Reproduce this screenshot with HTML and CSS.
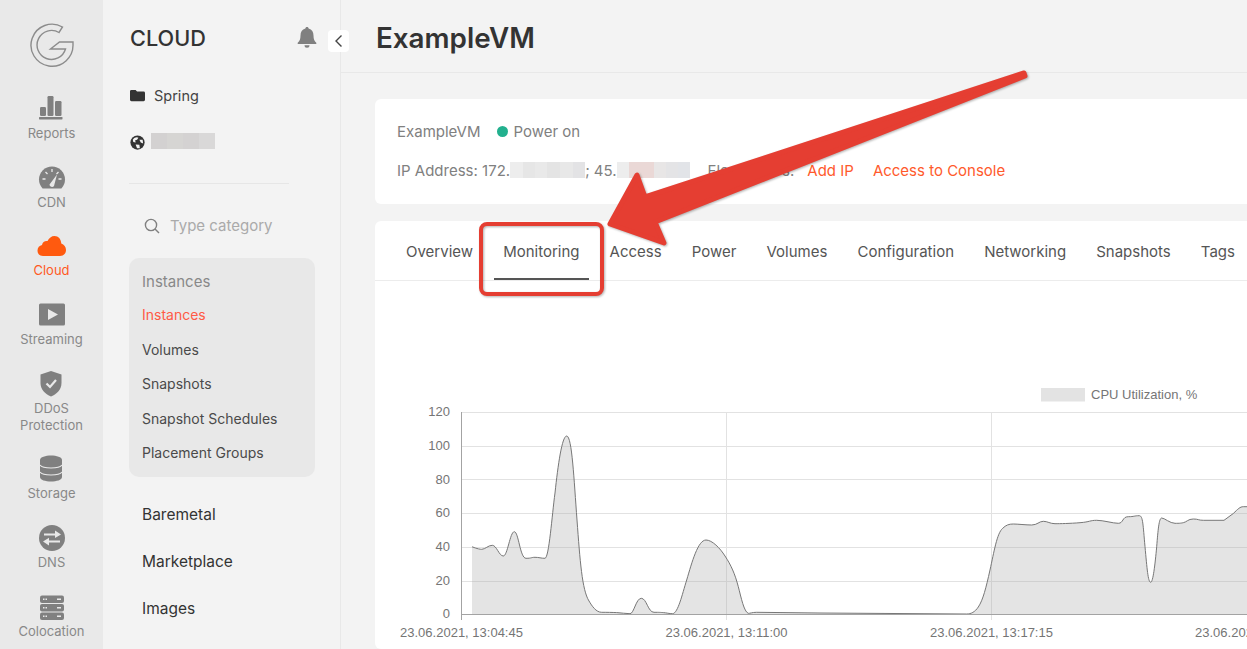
FILE: index.html
```html
<!DOCTYPE html>
<html lang="en">
<head>
<meta charset="utf-8">
<title>ExampleVM</title>
<link rel="stylesheet" href="styles.css">
</head>
<body>
<div class="app">
  <nav class="rail">
    <svg class="logo" viewBox="0 0 44 44"><path d="M32.5 4 A21 21 0 1 0 43 21.5 L43 19 L29.5 19 L20.5 26 L35.5 26 A14.5 14.5 0 1 1 29 9.5 Z" fill="none" stroke="#8c8c8c" stroke-width="1.4"/></svg>
    <a class="rail-item">
      <svg class="icon" viewBox="0 0 26 26"><rect x="2" y="13" width="6" height="9" rx="1.2"/><rect x="9.5" y="2" width="6" height="20" rx="1.2"/><rect x="17" y="7" width="6.5" height="15" rx="1.2"/><rect x="1" y="23" width="23.5" height="2.4" rx=".6"/></svg>
      <span>Reports</span>
    </a>
    <a class="rail-item">
      <svg class="icon" viewBox="0 0 26 26"><path d="M3.6 25.5 A13 13 0 1 1 22.4 25.5 Z"/><path d="M13 6v3M6.5 9l2 2M19.5 9l-2 2M3.5 16h3M22.5 16h-3" stroke="#e9e9e9" stroke-width="1.3" fill="none"/><path d="M10.5 21.5 L18 11.5 L15 23 A2.5 2.5 0 0 1 10.5 21.5 Z" fill="#e9e9e9"/></svg>
      <span>CDN</span>
    </a>
    <a class="rail-item active">
      <svg class="icon" viewBox="0 0 26 26"><path d="M4 25 C0.5 25 -1.5 22.5 -1.5 19.5 C-1.5 16.5 .5 14.5 3 14 C3.5 11 6 9.5 8.5 10 C10 7 12.5 5 15.5 5 C19.5 5 22 8 22.3 12.5 C25 13.5 27 16 27 19 C27 22.5 24.5 25 21 25 Z"/></svg>
      <span>Cloud</span>
    </a>
    <a class="rail-item">
      <svg class="icon" viewBox="0 0 26 26"><rect x="0" y="3.5" width="26" height="22" rx="1.5"/><path d="M9 9 L19 14.5 L9 20 Z" fill="#e9e9e9"/></svg>
      <span>Streaming</span>
    </a>
    <a class="rail-item">
      <svg class="icon" viewBox="0 0 26 26"><path d="M13 2 L23.5 5.5 L23.5 14 C23.5 20.5 19 25 13 27.5 C7 25 2.5 20.5 2.5 14 L2.5 5.5 Z"/><path d="M8.5 14.5 L12 18 L18 11" fill="none" stroke="#e9e9e9" stroke-width="2.2"/></svg>
      <span>DDoS<br>Protection</span>
    </a>
    <a class="rail-item">
      <svg class="icon" viewBox="0 0 26 26"><path d="M2 6 C2 0 24 0 24 6 V23 C24 29 2 29 2 23 Z"/><path d="M2 11 C5 15 21 15 24 11 M2 18 C5 22 21 22 24 18" fill="none" stroke="#e9e9e9" stroke-width="1.2"/></svg>
      <span>Storage</span>
    </a>
    <a class="rail-item">
      <svg class="icon" viewBox="0 0 26 26"><circle cx="13" cy="15" r="13"/><path d="M5 11.5 H17 M21 18.5 H9" fill="none" stroke="#e9e9e9" stroke-width="1.8"/><path d="M16 7.5 L22 11.5 L16 15 Z M10 14.8 L4 18.5 L10 22.5 Z" fill="#e9e9e9"/></svg>
      <span>DNS</span>
    </a>
    <a class="rail-item">
      <svg class="icon" viewBox="0 0 26 26"><rect x="1" y="3.5" width="24" height="7.5" rx="2"/><rect x="1" y="12" width="24" height="7.5" rx="2"/><rect x="1" y="20.5" width="24" height="7.5" rx="2"/><path d="M4 7.2h1.5M6.5 7.2h1.5M18 7.2h4M4 15.7h1.5M6.5 15.7h1.5M18 15.7h4M4 24.2h1.5M6.5 24.2h1.5M18 24.2h4" stroke="#e9e9e9" stroke-width="1.4"/></svg>
      <span>Colocation</span>
    </a>
  </nav>

  <aside class="side">
    <div class="side-head">
      <h2>CLOUD</h2>
      <svg class="bell" viewBox="0 0 20 22"><path d="M10 1 C11 1 11.6 1.7 11.6 2.6 C15 3.4 16.5 6 16.5 9.5 C16.5 13.5 17.5 15 19.3 16.8 V18 H.7 V16.8 C2.5 15 3.5 13.5 3.5 9.5 C3.5 6 5 3.4 8.4 2.6 C8.4 1.7 9 1 10 1 Z M7.5 19.2 H12.5 A2.5 2.5 0 0 1 7.5 19.2 Z"/></svg>
    </div>
    <div class="side-row">
      <svg class="side-icon" viewBox="0 0 16 14"><path d="M0 2.5 A1.5 1.5 0 0 1 1.5 1 H6 L7.5 2.8 H14.5 A1.5 1.5 0 0 1 16 4.3 V11.5 A1.5 1.5 0 0 1 14.5 13 H1.5 A1.5 1.5 0 0 1 0 11.5 Z"/></svg>
      <span>Spring</span>
    </div>
    <div class="side-row account">
      <svg class="side-icon" viewBox="0 0 16 16"><circle cx="8" cy="8" r="7.6"/><path d="M3 5 C5 2 8 1.8 9 3 L7.5 5 L5.5 5.5 L6 8 L3.5 7.5 Z M10 5 L13.5 5 L14 9 L11.5 8 Z M6 10 L10 10.5 L10.5 14 L7.5 14 Z" fill="#f3f3f3"/></svg>
      <span class="mosaic mosaic-account"></span>
    </div>
    <hr class="side-rule">
    <div class="search">
      <svg class="search-icon" viewBox="0 0 16 16"><circle cx="7" cy="7" r="5.6"/><path d="M11 11 L15 15"/></svg>
      <span>Type category</span>
    </div>
    <div class="panel">
      <div class="panel-head">Instances</div>
      <a class="panel-item current">Instances</a>
      <a class="panel-item">Volumes</a>
      <a class="panel-item">Snapshots</a>
      <a class="panel-item">Snapshot Schedules</a>
      <a class="panel-item">Placement Groups</a>
    </div>
    <a class="side-link first">Baremetal</a>
    <a class="side-link">Marketplace</a>
    <a class="side-link">Images</a>
  </aside>

  <main class="main">
    <header class="top"><h1>ExampleVM</h1></header>
    <div class="content">
      <section class="card info">
        <div class="info-row">
          <span class="muted">ExampleVM</span>
          <span class="dot"></span>
          <span class="muted power">Power on</span>
        </div>
        <div class="info-row">
          <span class="muted">IP Address: 172.</span><span class="mosaic mosaic-ip1"></span><span class="muted">; 45.</span><span class="mosaic mosaic-ip2"></span>
          <span class="muted floating">Floating IPs:</span>
          <a class="action add">Add IP</a>
          <a class="action console">Access to Console</a>
        </div>
      </section>
      <section class="card monitor">
        <div class="tabs">
          <a class="tab">Overview</a>
          <a class="tab selected">Monitoring</a>
          <a class="tab">Access</a>
          <a class="tab">Power</a>
          <a class="tab">Volumes</a>
          <a class="tab">Configuration</a>
          <a class="tab">Networking</a>
          <a class="tab">Snapshots</a>
          <a class="tab">Tags</a>
        </div>
        <svg class="chart" viewBox="375 281 900 368">
          <rect class="legend" x="1041" y="388" width="44" height="13.5"/>
          <text class="label" x="1091" y="399">CPU Utilization, %</text>
          <path class="grid" d="M461 412.5H1275M461 446.5H1275M461 479.5H1275M461 513.5H1275M461 547.5H1275M461 581.5H1275"/>
          <path class="grid" d="M726.5 412V620M991.5 412V620"/>
          <path class="area" d="M472 614.5 L472 546.7 S478 549.3 481.7 549.3 S488 545.3 492.3 545.3 S499 556 503.3 556 S510 531.7 514.3 531.7 S520 558.3 526 558.3 S531 557.3 535 557.3 S541 558.3 545 558.3 C549 558 552 515 555 493 C558 465 562 436 566.7 436 C572 436 574 480 577 520 C580 560 582 590 589 601 C592 606 596 612.3 601.7 612.3 S612 612.4 616.7 612.6 S626 613.7 630 613.7 S636 598.3 641.3 598.3 S648 612.3 654 612.3 S660 612.4 663.3 612.6 S669 613.7 672.7 613.7 C678 613 682 595 686.7 580 C692 562 698 540 706 540 C712 540 720 548 725 556 C731 565 735 574 738.3 586.7 C741 597 744 612 748.3 613.3 C750 613.5 752 612.3 756.7 612.3 L820 613 L966.7 614 C971 614 975 612 978.3 607 C983 600 986 588 990 570 C994 552 997 533 1002.7 528.3 C1006 525 1009 524 1013.3 524 S1026 525 1031.7 525 S1039 521.3 1043.3 521.3 S1050 523.7 1055 523.7 S1070 523.5 1080 522.7 S1090 520.3 1096.7 520.3 S1113 523.3 1118.3 523.3 S1122 516.7 1128.3 516.7 S1134 515.7 1139.3 515.7 C1143 515.7 1143 525 1145 546.7 C1147 568 1148 582.3 1150.7 582.3 C1153 582.3 1155 565 1156.7 546.7 C1158 530 1159 518 1161.7 518 S1170 523.3 1175 523.3 S1180 523.3 1183.3 522.7 S1188 519 1193.3 519 S1198 520.3 1203.3 520.3 L1224 520.3 L1233.3 513.5 C1238 509 1240 506.7 1243.3 506.7 L1275 506.7 L1275 614.5 Z"/>
          <path class="curve" d="M472 546.7 S478 549.3 481.7 549.3 S488 545.3 492.3 545.3 S499 556 503.3 556 S510 531.7 514.3 531.7 S520 558.3 526 558.3 S531 557.3 535 557.3 S541 558.3 545 558.3 C549 558 552 515 555 493 C558 465 562 436 566.7 436 C572 436 574 480 577 520 C580 560 582 590 589 601 C592 606 596 612.3 601.7 612.3 S612 612.4 616.7 612.6 S626 613.7 630 613.7 S636 598.3 641.3 598.3 S648 612.3 654 612.3 S660 612.4 663.3 612.6 S669 613.7 672.7 613.7 C678 613 682 595 686.7 580 C692 562 698 540 706 540 C712 540 720 548 725 556 C731 565 735 574 738.3 586.7 C741 597 744 612 748.3 613.3 C750 613.5 752 612.3 756.7 612.3 L820 613 L966.7 614 C971 614 975 612 978.3 607 C983 600 986 588 990 570 C994 552 997 533 1002.7 528.3 C1006 525 1009 524 1013.3 524 S1026 525 1031.7 525 S1039 521.3 1043.3 521.3 S1050 523.7 1055 523.7 S1070 523.5 1080 522.7 S1090 520.3 1096.7 520.3 S1113 523.3 1118.3 523.3 S1122 516.7 1128.3 516.7 S1134 515.7 1139.3 515.7 C1143 515.7 1143 525 1145 546.7 C1147 568 1148 582.3 1150.7 582.3 C1153 582.3 1155 565 1156.7 546.7 C1158 530 1159 518 1161.7 518 S1170 523.3 1175 523.3 S1180 523.3 1183.3 522.7 S1188 519 1193.3 519 S1198 520.3 1203.3 520.3 L1224 520.3 L1233.3 513.5 C1238 509 1240 506.7 1243.3 506.7 L1275 506.7"/>
          <path class="axis" d="M461.5 412V620M461 614.5H1275"/>
          <g class="label end">
            <text x="450" y="416">120</text>
            <text x="450" y="450">100</text>
            <text x="450" y="484">80</text>
            <text x="450" y="517">60</text>
            <text x="450" y="551">40</text>
            <text x="450" y="585">20</text>
            <text x="450" y="618">0</text>
          </g>
          <g class="label mid">
            <text x="461.5" y="636.5">23.06.2021, 13:04:45</text>
            <text x="726.5" y="636.5">23.06.2021, 13:11:00</text>
            <text x="991.5" y="636.5">23.06.2021, 13:17:15</text>
            <text x="1256.5" y="636.5">23.06.2021, 13:23:30</text>
          </g>
        </svg>
      </section>
    </div>
  </main>
</div>

<button class="collapse" type="button" aria-label="Collapse">
  <svg viewBox="0 0 10 14"><path d="M7.5 1.5 L2 7 L7.5 12.5"/></svg>
</button>

<svg class="annotation" viewBox="0 0 1247 649">
  <rect class="mark" x="481" y="224" width="121" height="70" rx="6"/>
  <path class="arrow" d="M1024 73 L645 197 L637 175 L610 224 L664 243 L655 222 L1025 76 Z"/>
</svg>
</body>
</html>
```
FILE: styles.css
```css
* { box-sizing: border-box; }
html, body { margin: 0; height: 100%; overflow: hidden; }
body { font-family: Inter, "Liberation Sans", sans-serif; color: #333; background: #f3f3f3; position: relative; }
h1, h2 { margin: 0; }
.app { display: flex; width: 1247px; height: 649px; overflow: hidden; }

.rail { flex: 0 0 103px; background: #e9e9e9; display: flex; flex-direction: column; align-items: center; padding-top: 23px; }
.logo { width: 44px; height: 44px; margin-bottom: 27px; flex: none; }
.rail-item { display: flex; flex-direction: column; align-items: center; flex: none; margin-bottom: 20.7px; color: #888; font-size: 13px; line-height: 17px; text-align: center; }
.icon { width: 26px; height: 26px; margin-bottom: 5px; fill: #808080; overflow: visible; display: block; }
.rail-item.active { color: #ff5a1f; }
.rail-item.active .icon { fill: #ff5a0f; }

.side { flex: 0 0 238px; padding: 0 25px 0 26px; background: #f3f3f3; border-right: 1px solid #e8e8e8; font-size: 14px; }
.side-head { height: 75px; padding-top: 1px; display: flex; align-items: center; justify-content: space-between; }
.side-head h2 { font-size: 21.7px; font-weight: 500; color: #333; padding-left: 1px; }
.bell { width: 20px; height: 22px; fill: #808080; margin-top: -2px; margin-right: -2px; }
.side-row { height: 40px; display: flex; align-items: center; gap: 9px; padding-left: 1px; color: #444; font-size: 14.5px; }
.side-row.account { margin-top: 6px; gap: 6px; }
.side-icon { width: 15px; height: 15px; fill: #333; flex: none; }
.account .side-icon { margin-top: 2px; }
.mosaic { display: inline-block; flex: none; }
.mosaic-account { width: 64px; height: 16px; background: linear-gradient(90deg, #d3d1d1 25%, #d6d5d3 25% 50%, #d4d2d2 50% 75%, #d9d8d8 75%); }
.side-rule { border: 0; border-top: 1px solid #e6e6e6; width: 160px; margin: 22px 0 0; }
.search { height: 39px; margin-top: 22px; display: flex; align-items: center; gap: 10px; padding-left: 15px; color: #aaa; font-size: 15px; }
.search-icon { width: 16px; height: 16px; fill: none; stroke: #808080; stroke-width: 1.4; flex: none; }
.panel { margin-top: 13px; height: 219px; padding: 6.5px 13px 0; border-radius: 10px; background: #e8e8e8; }
.panel-head { height: 33px; display: flex; align-items: center; color: #888; font-size: 15px; }
.panel-item { height: 34.5px; display: flex; align-items: center; color: #4a4a4a; font-size: 14px; }
.panel-item.current { color: #ff5a45; }
.side-link { display: flex; align-items: center; height: 47px; padding-left: 13px; color: #333; font-size: 15.5px; font-weight: 400; }
.side-link.first { margin-top: 13.5px; }

.main { flex: 1 1 auto; min-width: 0; overflow: hidden; }
.top { height: 73px; padding: 3px 0 0 35px; display: flex; align-items: center; border-bottom: 1px solid #e8e8e8; }
.top h1 { font-size: 27.8px; font-weight: 600; color: #333; }
.content { padding: 26px 0 0 34px; margin-right: -40px; display: flex; flex-direction: column; gap: 17px; }
.card { background: #fff; border-radius: 6px; }
.info { height: 105px; padding: 12.5px 22px 0; font-size: 15px; }
.info-row { height: 39px; display: flex; align-items: center; }
.muted { color: #808080; }
.dot { width: 11px; height: 11px; border-radius: 50%; background: #22b08e; margin: 0 5px 0 17px; }
.mosaic-ip1 { width: 75px; height: 16px; background: linear-gradient(90deg, #ededed 0 17%, #e6e6e6 17% 34%, #e9e9e9 34% 50%, #e4e4e4 50% 67%, #e8e8e8 67% 84%, #e3e3e5 84%); }
.mosaic-ip2 { width: 73px; height: 16px; background: linear-gradient(90deg, #ededed 0 17%, #ead8d6 17% 50%, #e8e6e6 50% 67%, #e4e4e6 67% 84%, #e2e4e8 84%); }
.floating { margin-left: 18px; }
.action { color: #ff5a2c; }
.add { margin-left: 13px; }
.console { margin-left: 19px; }

.tabs { height: 60px; padding: 0 22px; display: flex; align-items: stretch; gap: 12.1px; border-bottom: 1px solid #ececec; font-size: 15px; color: #555; }
.tab { padding: 2px 9px 0; display: flex; align-items: center; position: relative; flex: none; }
.tab.selected::after { content: ""; position: absolute; left: 0; right: 0; bottom: 0; height: 2px; background: #555; }
.chart { display: block; width: 900px; height: 368px; }
.legend { fill: #e3e3e3; }
.label { font-family: "Liberation Sans", Arial, sans-serif; font-size: 13px; fill: #757575; }
.end { text-anchor: end; }
.mid { text-anchor: middle; }
.grid { fill: none; stroke: #e2e2e2; stroke-width: 1; }
.area { fill: rgba(170, 170, 170, .32); stroke: none; }
.curve { fill: none; stroke: #777; stroke-width: 1; }
.axis { fill: none; stroke: #a3a3a3; stroke-width: 1; }

.collapse { position: absolute; left: 328px; top: 30px; width: 21px; height: 22px; padding: 0; border: 0; border-radius: 4px; background: #fff; display: flex; align-items: center; justify-content: center; }
.collapse svg { width: 10px; height: 14px; fill: none; stroke: #444; stroke-width: 1.4; }

.annotation { position: absolute; left: 0; top: 0; width: 1247px; height: 649px; pointer-events: none; filter: drop-shadow(1px 1px 1px rgba(0, 0, 0, .3)); }
.mark { fill: none; stroke: #e53e32; stroke-width: 4; }
.arrow { fill: #e53e32; stroke: #e53e32; stroke-width: 5; stroke-linejoin: round; }
```
